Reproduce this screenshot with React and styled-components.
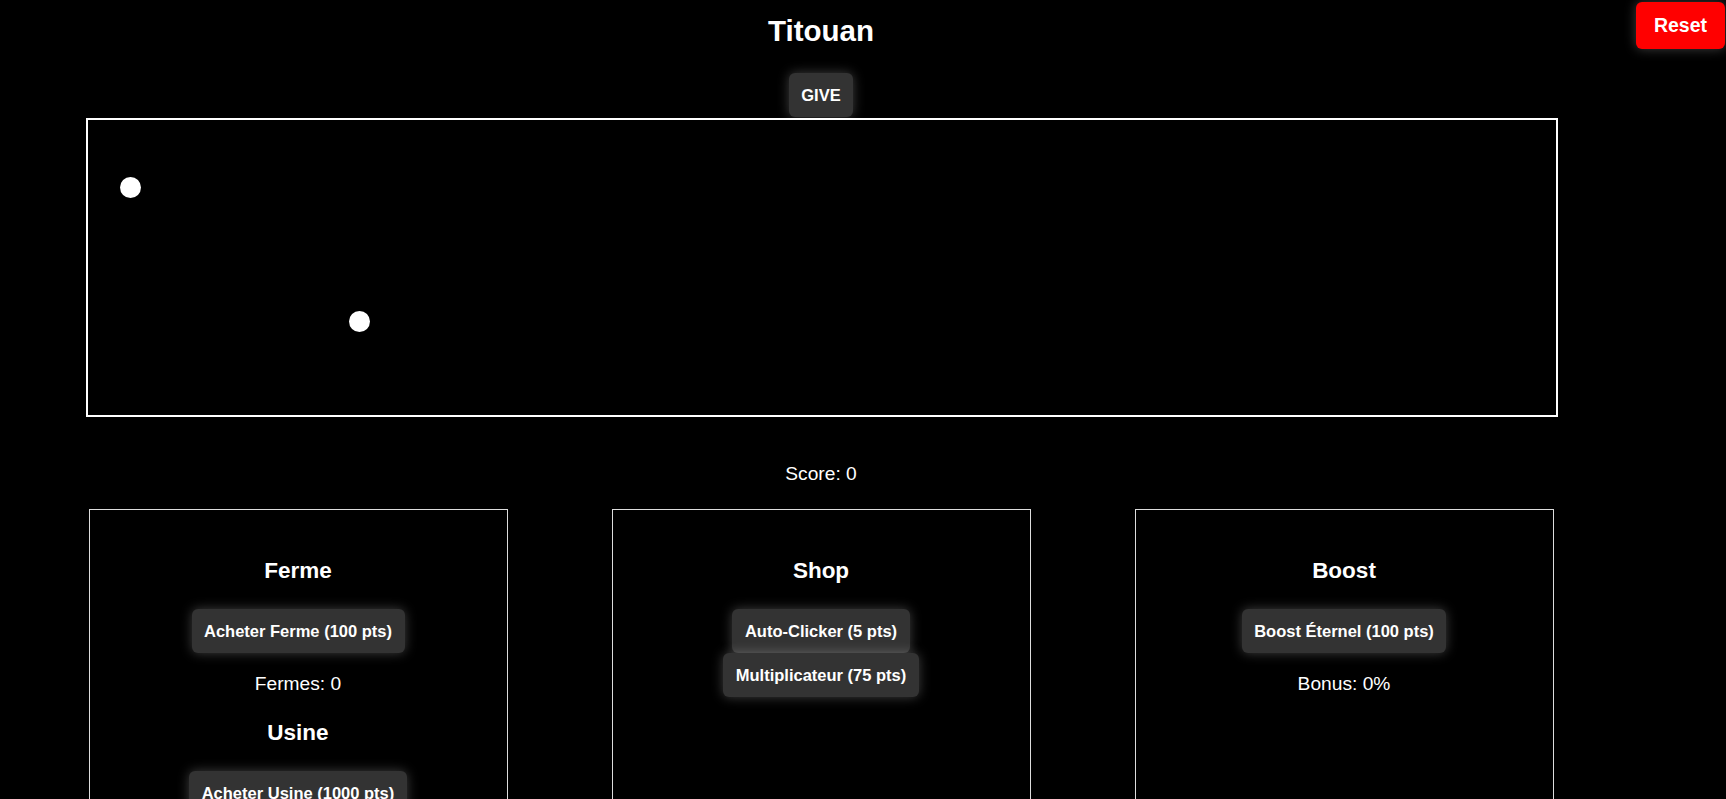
import React from "react";
import styled, { createGlobalStyle } from "styled-components";

const GlobalStyle = createGlobalStyle`
  html, body {
    margin: 0;
    padding: 0;
    background: #000;
    overflow: hidden;
  }
  body {
    font-family: "Liberation Sans", Arial, sans-serif;
    color: #fff;
  }
`;

const Page = styled.div`
  position: relative;
  min-height: 799px;
  background: #000;
`;

const Main = styled.main`
  display: flex;
  flex-direction: column;
  align-items: center;
  padding: 14px 92px 0 8px;
`;

const Title = styled.h2`
  margin: 0 0 26px;
  font-size: 29.5px;
  line-height: 33px;
  font-weight: bold;
`;

const Button = styled.button`
  display: block;
  padding: 12px 12.5px;
  border: none;
  border-radius: 6px;
  background: ${(p) => (p.$danger ? "#ff0000" : "#333")};
  color: #fff;
  font-family: "Liberation Sans", Arial, sans-serif;
  font-size: ${(p) => (p.$danger ? "19.5px" : "16.5px")};
  line-height: ${(p) => (p.$danger ? "23px" : "20px")};
  font-weight: bold;
  box-shadow: 0 0 12px rgba(255, 255, 255, 0.25);
  cursor: pointer;
  white-space: nowrap;
`;

const ResetButton = styled(Button)`
  position: absolute;
  top: 2px;
  right: 1px;
  padding: 12px 18px;
`;

const Field = styled.div`
  position: relative;
  width: 1468px;
  height: 295px;
  margin: 1px 0 0 2px;
  border: 2px solid #fff;
  background: #000;
`;

const Dot = styled.span`
  position: absolute;
  width: 21px;
  height: 21px;
  margin: -10.5px 0 0 -10.5px;
  border-radius: 50%;
  background: #fff;
`;

const Score = styled.p`
  margin: 46px 0 24px;
  font-size: 19.2px;
  line-height: 22px;
`;

const Cards = styled.div`
  display: flex;
  justify-content: center;
  gap: 104px;
`;

const Card = styled.section`
  box-sizing: border-box;
  width: 419px;
  min-height: 360px;
  padding-top: 48px;
  border: 1px solid #ddd;
  display: flex;
  flex-direction: column;
  align-items: center;
`;

const CardTitle = styled.h3`
  margin: 0 0 25px;
  font-size: 22.5px;
  line-height: 26px;
  font-weight: bold;
`;

const Stat = styled.p`
  margin: 20px 0 24.5px;
  font-size: 19.2px;
  line-height: 22px;
`;

const dots = [
  { x: 42.5, y: 67 },
  { x: 271, y: 201 },
];

export default function App() {
  return (
    <Page>
      <GlobalStyle />
      <ResetButton $danger>Reset</ResetButton>
      <Main>
        <Title>Titouan</Title>
        <Button>GIVE</Button>
        <Field>
          {dots.map((d, i) => (
            <Dot key={i} style={{ left: d.x, top: d.y }} />
          ))}
        </Field>
        <Score>Score: 0</Score>
        <Cards>
          <Card>
            <CardTitle>Ferme</CardTitle>
            <Button>Acheter Ferme (100 pts)</Button>
            <Stat>Fermes: 0</Stat>
            <CardTitle>Usine</CardTitle>
            <Button>Acheter Usine (1000 pts)</Button>
          </Card>
          <Card>
            <CardTitle>Shop</CardTitle>
            <Button>Auto-Clicker (5 pts)</Button>
            <Button>Multiplicateur (75 pts)</Button>
          </Card>
          <Card>
            <CardTitle>Boost</CardTitle>
            <Button>Boost Éternel (100 pts)</Button>
            <Stat>Bonus: 0%</Stat>
          </Card>
        </Cards>
      </Main>
    </Page>
  );
}
